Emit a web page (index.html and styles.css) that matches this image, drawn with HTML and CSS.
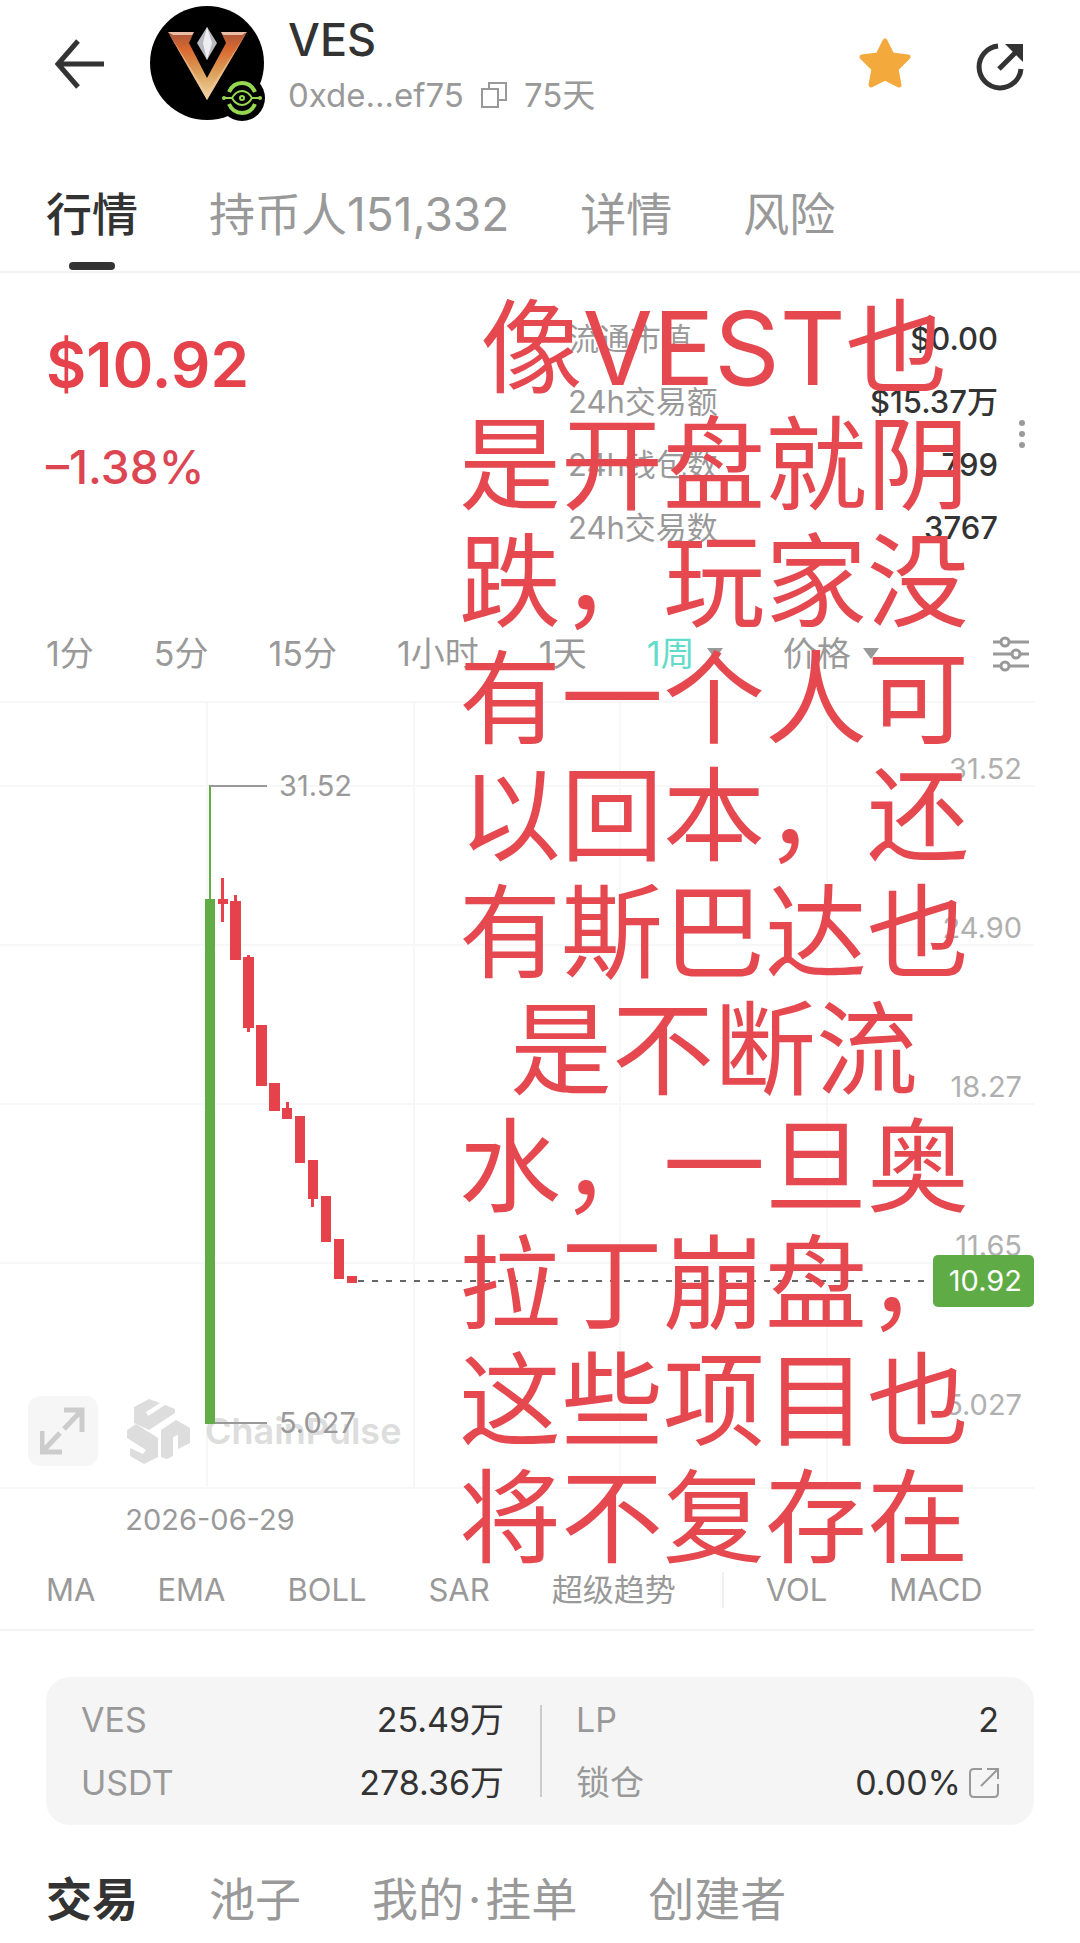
FILE: index.html
```
<!DOCTYPE html>
<html lang="zh-CN">
  <head>
    <meta charset="utf-8" />
    <meta name="viewport" content="width=device-width, initial-scale=1" />
    <title>VES</title>
    <link rel="stylesheet" href="styles.css">
  </head>
  <body>
    <header class="header">
      <button class="icon-btn" aria-label="返回">
        <svg width="52" height="54" viewBox="0 0 52 54" fill="none" stroke="#333" stroke-width="5">
          <path d="M50 27H4M24 4L4 27l20 23" />
        </svg>
      </button>
      <svg class="logo" width="116" height="116" viewBox="0 0 116 116">
        <defs>
          <linearGradient id="gold" x1="0" y1="0" x2="0" y2="1">
            <stop offset="0" stop-color="#a8563c" />
            <stop offset="0.25" stop-color="#d9682f" />
            <stop offset="0.6" stop-color="#dba05a" />
            <stop offset="1" stop-color="#f3d9a6" />
          </linearGradient>
        </defs>
        <circle cx="57" cy="57" r="57" />
        <circle cx="92" cy="92" r="23" />
        <path d="M18 26H44L39 37L57 72L76 37L71 26H97L57 94Z" fill="url(#gold)" />
        <path d="M18 26H44L42 29H23ZM71 26H97L92 29H73Z" fill="#e9bda6" />
        <path d="M18 26L57 94L97 26L57 88Z" fill="#f0c9a4" opacity="0.6" />
        <path d="M57 21L67 37L57 54L47 37Z" fill="#b9b9c0" />
        <path d="M57 21L62 37L57 54L53 37Z" fill="#eeeef2" />
        <circle cx="92" cy="92" r="20" />
        <g fill="none" stroke="#96d750" stroke-width="4">
          <path d="M79 86Q83 77 92 77T105 86" />
          <path d="M79 98Q83 107 92 107T105 98" />
          <path d="M74 92H82Q86 85 92 85T102 92H111M82 92Q86 99 92 99T102 92" stroke-width="2" />
          <circle cx="92" cy="92" r="2" stroke-width="2" />
          <circle cx="74" cy="92" r="1" stroke-width="2" />
          <circle cx="110" cy="92" r="1" stroke-width="2" />
        </g>
      </svg>
      <div class="token">
        <h1>VES</h1>
        <div class="token-meta">
          <span>0xde...ef75</span>
          <button class="icon-btn" aria-label="复制">
            <svg width="28" height="28" viewBox="0 0 28 28" fill="none" stroke="#999" stroke-width="2">
              <path d="M2 8h16v18H2zM9 8V2h17v17h-8" />
            </svg>
          </button>
          <span>75天</span>
        </div>
      </div>
      <div class="actions">
        <button class="icon-btn" aria-label="收藏">
          <svg width="54" height="54" viewBox="0 0 54 54">
            <path d="M27 4L34 18L50 20L38 32L41 48L27 41L13 48L16 32L4 20L20 18Z" fill="#f3a93c" stroke="#f3a93c" stroke-width="5" stroke-linejoin="round" />
          </svg>
        </button>
        <button class="icon-btn" aria-label="分享">
          <svg width="48" height="48" viewBox="0 0 48 48">
            <path d="M22 3A21 21 0 1 0 45 26M23 26L40 9" fill="none" stroke="#333" stroke-width="5" />
            <path d="M29 1H47V19Z" fill="#333" />
          </svg>
        </button>
      </div>
    </header>

    <nav class="tabs tabs-top">
      <a class="tab active" href="#market">行情</a>
      <a class="tab" href="#holders">持币人151,332</a>
      <a class="tab" href="#detail">详情</a>
      <a class="tab" href="#risk">风险</a>
    </nav>

    <main class="main" id="market">
      <section class="quote">
        <div>
          <div class="price">$10.92</div>
          <div class="change">–1.38%</div>
        </div>
        <dl class="stats">
          <div><dt>流通市值</dt><dd>$0.00</dd></div>
          <div><dt>24h交易额</dt><dd>$15.37万</dd></div>
          <div><dt>24h钱包数</dt><dd>799</dd></div>
          <div><dt>24h交易数</dt><dd>3767</dd></div>
        </dl>
        <button class="icon-btn more" aria-label="更多">
          <svg width="8" height="30" viewBox="0 0 8 30" fill="#999">
            <circle cx="4" cy="4" r="3" /><circle cx="4" cy="15" r="3" /><circle cx="4" cy="26" r="3" />
          </svg>
        </button>
      </section>

      <div class="periods">
        <button>1分</button>
        <button>5分</button>
        <button>15分</button>
        <button>1小时</button>
        <button>1天</button>
        <label class="picker picked">
          <select aria-label="周期"><option>1周</option></select>
          <svg width="16" height="12" viewBox="0 0 16 12"><path d="M0 0H16L8 11Z" fill="#999" /></svg>
        </label>
        <label class="picker">
          <select aria-label="图表类型"><option>价格</option></select>
          <svg width="16" height="12" viewBox="0 0 16 12"><path d="M0 0H16L8 11Z" fill="#999" /></svg>
        </label>
        <button class="icon-btn settings" aria-label="设置">
          <svg width="36" height="36" viewBox="0 0 36 36" fill="#fff" stroke="#999" stroke-width="3">
            <path d="M0 6H36M0 18H36M0 30H36" />
            <circle cx="12" cy="6" r="4" /><circle cx="23" cy="18" r="4" /><circle cx="12" cy="30" r="4" />
          </svg>
        </button>
      </div>

      <div class="chart">
        <svg class="chart-svg" viewBox="0 0 1034 850">
          <path class="grid" d="M0 1H1034M0 85H1034M0 244H1034M0 403H1034M0 562H1034M0 787H1034M207 0V787M414 0V787M620 0V787M827 0V787" />

          <!-- watermark -->
          <g transform="translate(126 697)" fill="#ddd">
            <path d="M8 9L23 1L34 5L20 14L22 18L39 7L49 11V15L23 32L8 25Z" />
            <path d="M1 32L10 26L32 40V59L18 66L4 58V50L17 56L20 52L1 40Z" />
            <path d="M35 32L50 22L64 30V45L52 51V37L47 39V58L41 61L35 59Z" />
          </g>
          <text class="watermark" x="205" y="743">ChainPulse</text>

          <!-- candles -->
          <g fill="#62ac46">
            <path d="M209 84h2v115h-2zM205 198h10v525h-10z" />
          </g>
          <g fill="#e5424b">
            <path d="M221 177h3v44h-3zM218 198h10v5h-10z" />
            <path d="M234 194h3v8h-3zM230 200h11v59h-11z" />
            <path d="M247 254h3v77h-3zM243 256h11v71h-11z" />
            <path d="M256 324h11v61h-11z" />
            <path d="M269 382h11v28h-11z" />
            <path d="M286 401h3v8h-3zM282 407h10v11h-10z" />
            <path d="M295 415h10v47h-10z" />
            <path d="M311 490h3v16h-3zM308 459h10v39h-10z" />
            <path d="M321 495h10v46h-10z" />
            <path d="M334 538h10v40h-10z" />
            <path d="M347 575h10v7h-10z" />
          </g>
          <path class="mark" d="M210 85H267M215 722H267" />
          <text class="mark-text" x="279" y="95">31.52</text>
          <text class="mark-text" x="279" y="732">5.027</text>
          <path class="last-line" d="M358 580H930" />

          <g class="axis">
            <text x="1022" y="78">31.52</text>
            <text x="1022" y="237">24.90</text>
            <text x="1022" y="396">18.27</text>
            <text x="1022" y="555">11.65</text>
            <text x="1022" y="714">5.027</text>
          </g>
          <rect x="933" y="554" width="101" height="52" rx="5" fill="#5fac46" />
          <text class="last-price" x="1022" y="590">10.92</text>
          <text class="date" x="210" y="829">2026-06-29</text>
        </svg>
        <button class="expand" aria-label="全屏">
          <svg width="46" height="48" viewBox="0 0 46 48" fill="none" stroke="#ccc" stroke-width="5">
            <path d="M24 3H42V25M42 3L24 22M2 24V45H22M2 45L20 26" />
          </svg>
        </button>
      </div>

      <div class="indicators">
        <div class="group">
          <button>MA</button>
          <button>EMA</button>
          <button>BOLL</button>
          <button>SAR</button>
          <button>超级趋势</button>
        </div>
        <div class="group">
          <button>VOL</button>
          <button>MACD</button>
        </div>
      </div>

      <p class="caption">像VEST也
是开盘就阴
跌，玩家没
有一个人可
以回本，还
有斯巴达也
是不断流
水，一旦奥
拉丁崩盘，
这些项目也
将不复存在</p>
    </main>

    <section class="pool">
      <dl>
        <div><dt>VES</dt><dd>25.49万</dd></div>
        <div><dt>USDT</dt><dd>278.36万</dd></div>
      </dl>
      <dl>
        <div><dt>LP</dt><dd>2</dd></div>
        <div>
          <dt>锁仓</dt>
          <dd>
            <a href="#lock">0.00%
              <svg width="30" height="30" viewBox="0 0 30 30" fill="none" stroke="#999" stroke-width="2">
                <path d="M13 1H5Q1 1 1 5V25Q1 29 5 29H25Q29 29 29 25V16M12 18L29 1M18 1H29V11" />
              </svg>
            </a>
          </dd>
        </div>
      </dl>
    </section>

    <nav class="tabs">
      <a class="tab active strong" href="#trades">交易</a>
      <a class="tab" href="#pools">池子</a>
      <a class="tab" href="#orders">我的<span class="dot">·</span>挂单</a>
      <a class="tab" href="#creator">创建者</a>
    </nav>
  </body>
</html>
```

FILE: styles.css
```
* {
  box-sizing: border-box;
}
body {
  margin: 0;
  background-color: #fff;
  color: #333;
  font-family: Inter, "Noto Sans CJK SC", sans-serif;
  font-size: 33px;
  line-height: 40px;
}
h1,
p,
dl,
dd {
  margin: 0;
}
a {
  color: inherit;
  text-decoration: none;
}
svg {
  display: block;
}
button,
select {
  border: 0;
  padding: 0;
  background: none;
  color: inherit;
  font: inherit;
  cursor: pointer;
}
.icon-btn {
  flex: none;
}

/* header */
.header {
  display: flex;
  align-items: center;
  padding: 5px 56px 0 54px;
}
.logo {
  flex: none;
  margin: 0 22px 0 44px;
}
.token {
  padding-top: 8px;
}
.token h1 {
  font-size: 45px;
  font-weight: 500;
  line-height: 54px;
}
.token-meta {
  display: flex;
  align-items: center;
  gap: 16px;
  line-height: 56px;
  color: #999;
}
.actions {
  display: flex;
  align-items: flex-end;
  gap: 64px;
  margin-left: auto;
}

/* tabs */
.tabs {
  display: flex;
  gap: 71px;
  padding: 0 46px;
  font-size: 46px;
  line-height: 60px;
  color: #999;
  white-space: nowrap;
}
.tabs-top {
  padding-top: 61px;
  padding-bottom: 27px;
  border-bottom: 2px solid #f3f3f3;
}
.tab {
  position: relative;
}
.active {
  color: #333;
  font-weight: 500;
}
.tabs-top .active::after {
  content: "";
  position: absolute;
  left: 50%;
  bottom: -26px;
  width: 46px;
  height: 8px;
  margin-left: -23px;
  border-radius: 4px;
  background-color: #333;
}
.strong {
  font-weight: 700;
}
.dot {
  margin: 0 4px;
}

/* quote */
.main {
  position: relative;
}
.quote {
  display: flex;
  align-items: flex-start;
  height: 348px;
  padding: 34px 54px 0 46px;
}
.price {
  font-size: 62px;
  font-weight: 600;
  line-height: 116px;
  color: #e5424b;
}
.change {
  font-size: 46px;
  font-weight: 500;
  line-height: 88px;
  color: #dc4652;
}
.stats {
  width: 430px;
  margin-left: auto;
  font-size: 31px;
  line-height: 63px;
}
.stats div {
  display: flex;
  justify-content: space-between;
}
.stats dt {
  color: #999;
}
.stats dd {
  font-weight: 500;
}
.more {
  margin: 112px 0 0 20px;
}

/* periods */
.periods {
  display: flex;
  align-items: center;
  gap: 60px;
  height: 80px;
  padding: 0 51px 14px 46px;
  font-size: 34px;
  color: #999;
  white-space: nowrap;
}
.picker {
  display: flex;
  align-items: center;
  gap: 12px;
}
.picker select {
  appearance: none;
}
.picked {
  color: #62dcc8;
}
.settings {
  margin-left: auto;
}

/* chart */
.chart {
  position: relative;
  margin-right: 46px;
}
.chart-svg {
  width: 100%;
}
.grid {
  fill: none;
  stroke: #f7f7f7;
  stroke-width: 2;
}
.watermark {
  fill: #ddd;
  font-size: 36px;
  font-weight: 600;
}
.mark {
  fill: none;
  stroke: #999;
  stroke-width: 2;
}
.mark-text {
  fill: #999;
  font-size: 29px;
}
.last-line {
  stroke: #666;
  stroke-width: 2;
  stroke-dasharray: 6 8;
}
.axis {
  fill: #b0b0b0;
  font-size: 29px;
  text-anchor: end;
}
.last-price {
  fill: #fff;
  font-size: 29px;
  text-anchor: end;
}
.date {
  fill: #999;
  font-size: 29px;
  text-anchor: middle;
}
.expand {
  position: absolute;
  left: 28px;
  bottom: 85px;
  width: 70px;
  height: 70px;
  padding: 0 12px;
  border-radius: 12px;
  background-color: #f6f6f6;
}

/* indicators */
.indicators {
  display: flex;
  align-items: center;
  height: 80px;
  margin-right: 46px;
  border-bottom: 2px solid #f3f3f3;
  font-size: 31px;
  line-height: 36px;
  color: #999;
  white-space: nowrap;
}
.group {
  display: flex;
  gap: 62px;
  padding: 0 46px;
}
.group + .group {
  border-left: 2px solid #f0f0f0;
  padding-left: 42px;
}

/* text laid over the quote and the chart */
.caption {
  position: absolute;
  top: 17px;
  right: 111px;
  color: #e5484f;
  font-size: 102px;
  line-height: 117px;
  text-align: center;
  white-space: pre;
  pointer-events: none;
}

/* pool */
.pool {
  display: flex;
  margin: 46px 46px 44px 46px;
  padding: 11px 35px;
  border-radius: 24px;
  background-color: #f5f5f5;
  font-size: 34px;
  line-height: 63px;
}
.pool dl {
  flex: 1;
  padding-right: 36px;
}
.pool dl + dl {
  padding: 0 0 0 36px;
  background: linear-gradient(#ccc, #ccc) left center / 2px 92px no-repeat;
}
.pool dl div {
  display: flex;
  justify-content: space-between;
}
.pool dt {
  color: #999;
}
.pool a {
  display: flex;
  align-items: center;
  gap: 8px;
}
```
